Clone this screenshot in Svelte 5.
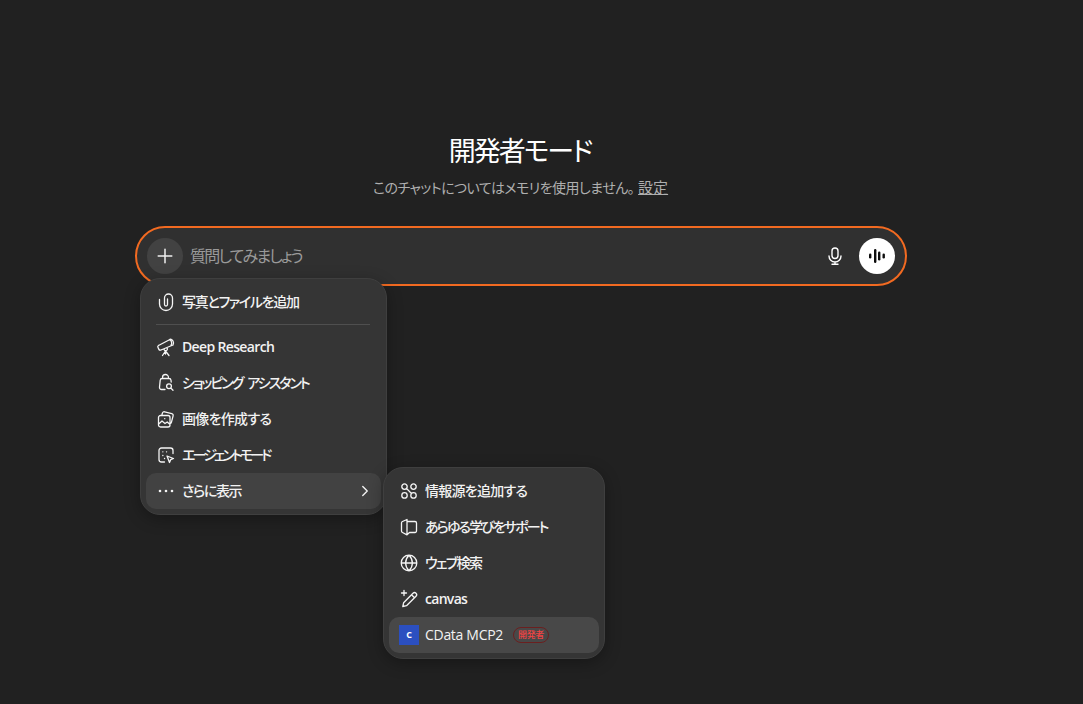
<script>
  const mainItems = [
    { label: 'Deep Research', icon: 'scope', ls: '-0.65px', latin: true },
    { label: 'ショッピング アシスタント', icon: 'bag', ls: '-2px' },
    { label: '画像を作成する', icon: 'image', ls: '-0.7px' },
    { label: 'エージェントモード', icon: 'agent', ls: '-2.9px' }
  ];
  const subItems = [
    { label: '情報源を追加する', icon: 'nodes', ls: '-0.75px' },
    { label: 'あらゆる学びをサポート', icon: 'book', ls: '-1.9px' },
    { label: 'ウェブ検索', icon: 'globe', ls: '-1.6px' },
    { label: 'canvas', icon: 'pen', ls: '-0.7px', latin: true }
  ];
  const paths = {
    clip: 'M3.500 7.500V12a6.500 6.500 0 0 0 13 0V6a4 4 0 0 0-8 0v6.500a1.500 1.500 0 0 0 3 0V7',
    scope: 'M2.500 8.500L13 3 M5 13L17 8 M2.500 8.500c-.8.500-1 1-.6 1.800l1 2.100c.4.800 1.100 1 2.100.6 M13 3c1.500-1.200 3-1 4 1s.8 3 0 4 M13 3c1-.4 2 .5 2.500 2 .4 1.500.3 2.500-.5 3 M8 11.800a1.700 1.700 0 1 0 3.200-.6 M9.500 14l-3 4.500 M9.500 14l3.500 4.500 M9.500 14v3',
    bag: 'M6.500 5.500V4.500a3 3 0 0 1 6 0v1 M9 16.500H5.500a2 2 0 0 1-2-2.200l.7-7a2 2 0 0 1 2-1.800h6.800a2 2 0 0 1 2 1.800l.2 1.700 M13 15.700a2.400 2.400 0 1 0 0-4.800 2.400 2.400 0 0 0 0 4.800z M15 15.300l2 2',
    image: 'M6 5.500l.4-1.400a1.800 1.800 0 0 1 2.200-1.300l7.200 1.800a1.800 1.800 0 0 1 1.300 2.200l-1.700 6.600a1.800 1.800 0 0 1-1.400 1.300 M4.500 6.500h7.500a2 2 0 0 1 2 2v7.500a2 2 0 0 1-2 2H4.500a2 2 0 0 1-2-2V8.500a2 2 0 0 1 2-2z M2.700 15l3.300-3 3 2.500 2.200-1.500 2.600 2.200 M8.700 9.700h.1',
    agent: 'M8.500 17H5.500a2.500 2.500 0 0 1-2.500-2.500v-9A2.500 2.500 0 0 1 5.500 3h9A2.500 2.500 0 0 1 17 5.500v3 M11 11l6.500 2.500-2.800 1.200-1.200 2.800z M6.800 6.800h.1 M10.500 6.800h.1 M6.800 10.500h.1 M8.500 13.500h.1',
    nodes: 'M5.500 8.300a2.700 2.700 0 1 0 0-5.400 2.700 2.700 0 0 0 0 5.400z M14.500 8.300a2.700 2.700 0 1 0 0-5.400 2.700 2.700 0 0 0 0 5.400z M5.500 17.100a2.700 2.700 0 1 0 0-5.400 2.700 2.700 0 0 0 0 5.400z M14.500 17.100a2.700 2.700 0 1 0 0-5.400 2.700 2.700 0 0 0 0 5.400z M7.500 7.500l5 5',
    book: 'M8 2.500L3.500 4.500c-.7.300-1 .8-1 1.500v8c0 .7.300 1.200 1 1.500L8 17.800V2.500z M8 4.500h8a1.500 1.500 0 0 1 1.500 1.500v8a1.500 1.500 0 0 1-1.500 1.500H10.500L8 17.800',
    globe: 'M10 17.800a7.800 7.800 0 1 0 0-15.600 7.800 7.800 0 0 0 0 15.600z M2.500 10h15 M10 2.200c-4.500 4.500-4.500 11 0 15.600 M10 2.200c4.500 4.500 4.500 11 0 15.600',
    pen: 'M14 4.200a2.100 2.100 0 0 1 3 3l-9.500 9.500-3.700.8.800-3.700z M12.500 5.700l3 3 M5 1.500v5 M2.500 4h5'
  };
</script>

{#snippet icon(name)}
  <svg class="icon" viewBox="0 0 20 20" fill="none" stroke="currentColor" stroke-width="1.300" stroke-linecap="round" stroke-linejoin="round">
    <path d={paths[name]} />
  </svg>
{/snippet}

<main class="page">
  <h1>開発者モード</h1>
  <p class="sub"><span class="sub-text">このチャットについてはメモリを使用しません。</span><span class="link">設定</span></p>

  <div class="composer">
    <button class="plus" aria-label="追加">
      <svg viewBox="0 0 20 20" width="20" height="20" fill="none" stroke="currentColor" stroke-width="1.500" stroke-linecap="round"><path d="M10 3.200v13.600M3.200 10h13.600" /></svg>
    </button>
    <span class="placeholder">質問してみましょう</span>
    <svg class="mic" viewBox="0 0 20 20" width="20" height="20" fill="none" stroke="currentColor" stroke-width="1.400" stroke-linecap="round"><rect x="7" y="2" width="6" height="10.500" rx="3" /><path d="M4 10a6 6 0 0 0 12 0M10 16v2.300M7 18.300h6" /></svg>
    <button class="voice" aria-label="音声">
      <svg viewBox="0 0 20 20" width="20" height="20" fill="#0d0d0d"><rect x="2" y="7.500" width="2.400" height="5" rx="1.200" /><rect x="7" y="3" width="2.400" height="14" rx="1.200" /><rect x="11" y="5.500" width="2.400" height="9" rx="1.200" /><rect x="15.500" y="7.500" width="2.400" height="5" rx="1.200" /></svg>
    </button>

    <div class="menu main-menu">
      <div class="item">{@render icon('clip')}<span style:letter-spacing="-1.3px">写真とファイルを追加</span></div>
      <div class="sep"></div>
      {#each mainItems as it}
        <div class="item">{@render icon(it.icon)}<span class:latin={it.latin} style:letter-spacing={it.ls}>{it.label}</span></div>
      {/each}
      <div class="item active">
        <svg class="icon" viewBox="0 0 20 20" fill="currentColor"><circle cx="4" cy="10" r="1.300" /><circle cx="10" cy="10" r="1.300" /><circle cx="16" cy="10" r="1.300" /></svg>
        <span style:letter-spacing="-1.4px">さらに表示</span>
        <svg class="chev" viewBox="0 0 20 20" fill="none" stroke="currentColor" stroke-width="1.500" stroke-linecap="round" stroke-linejoin="round"><path d="M7.500 5l5 5-5 5" /></svg>
      </div>
    </div>

    <div class="menu sub-menu">
      {#each subItems as it}
        <div class="item">{@render icon(it.icon)}<span class:latin={it.latin} style:letter-spacing={it.ls}>{it.label}</span></div>
      {/each}
      <div class="item active light">
        <span class="logo">C</span>
        <span class="name">CData MCP2</span>
        <span class="badge">開発者</span>
      </div>
    </div>
  </div>
</main>

<style>
  :global(body) {
    margin: 0;
    background: #212121;
  }
  .page {
    height: 704px;
    box-sizing: border-box;
    padding-top: 131px;
    background: #212121;
    color: #fff;
    font-family: "Open Sans", "Noto Sans CJK JP", sans-serif;
    font-feature-settings: "palt";
    overflow: hidden;
  }
  h1 {
    margin: 0;
    width: 1040px;
    text-align: center;
    font-size: 27px;
    line-height: 40px;
    font-weight: 400;
    letter-spacing: -2px;
  }
  .sub {
    margin: 6px 0 0;
    width: 1041px;
    height: 20px;
    text-align: center;
    font-size: 14px;
    line-height: 20px;
    color: #afafaf;
  }
  .sub-text {
    letter-spacing: -0.55px;
  }
  .link {
    margin-left: 4px;
    font-size: 15px;
    text-decoration: underline;
  }
  .composer {
    position: relative;
    margin: 29px 0 0 135px;
    width: 772px;
    height: 60px;
    box-sizing: border-box;
    padding: 0 10px;
    display: flex;
    align-items: center;
    background: #303030;
    border: 2px solid #f26a21;
    border-radius: 30px;
  }
  button {
    border: 0;
    padding: 0;
    display: flex;
    align-items: center;
    justify-content: center;
    flex: none;
    width: 36px;
    height: 36px;
    border-radius: 50%;
  }
  .plus {
    background: #424242;
    color: #f0f0f0;
  }
  .placeholder {
    flex: 1;
    margin: -2px 0 0 7px;
    font-size: 16px;
    letter-spacing: -1.8px;
    color: #9a9a9a;
  }
  .mic {
    margin-right: 14px;
    color: #fff;
  }
  .voice {
    background: #fff;
  }
  .menu {
    position: absolute;
    box-sizing: border-box;
    padding: 5px;
    background: #353535;
    border-radius: 20px;
    box-shadow: 0 4px 16px rgba(0, 0, 0, 0.3);
    border: 1px solid #3f3f3f;
  }
  .main-menu {
    left: 3px;
    top: 50px;
    width: 247px;
    height: 237px;
  }
  .sub-menu {
    left: 246px;
    top: 239px;
    width: 222px;
    height: 192px;
  }
  .item {
    height: 36px;
    display: flex;
    align-items: center;
    gap: 6px;
    padding: 0 10px;
    border-radius: 10px;
    font-size: 14px;
    line-height: 18px;
    font-weight: 500;
    word-spacing: 3px;
    color: #f2f2f2;
    white-space: nowrap;
  }
  .latin {
    font-weight: 600;
    word-spacing: 0;
  }
  .icon {
    width: 20px;
    height: 20px;
    flex: none;
    color: #f5f5f5;
  }
  .sep {
    height: 1px;
    margin: 4px 11px 4px 10px;
    background: #4f4f4f;
  }
  .active {
    background: #424242;
  }
  .light {
    background: #484848;
  }
  .chev {
    margin-left: auto;
    margin-right: -3px;
    width: 18px;
    height: 18px;
  }
  .logo {
    width: 20px;
    height: 20px;
    flex: none;
    background: #2b4fc0;
    color: #fff;
    font-size: 9px;
    font-weight: 700;
    display: flex;
    align-items: center;
    justify-content: center;
  }
  .name {
    font-weight: 400;
    word-spacing: 0;
    letter-spacing: -0.3px;
  }
  .badge {
    margin-left: 4px;
    box-sizing: border-box;
    height: 16px;
    width: 36px;
    justify-content: center;
    display: flex;
    align-items: center;
    border: 1px solid #6b1f1f;
    border-radius: 8px;
    font-size: 9px;
    letter-spacing: -0.3px;
    font-weight: 500;
    color: #ef4444;
  }
</style>
